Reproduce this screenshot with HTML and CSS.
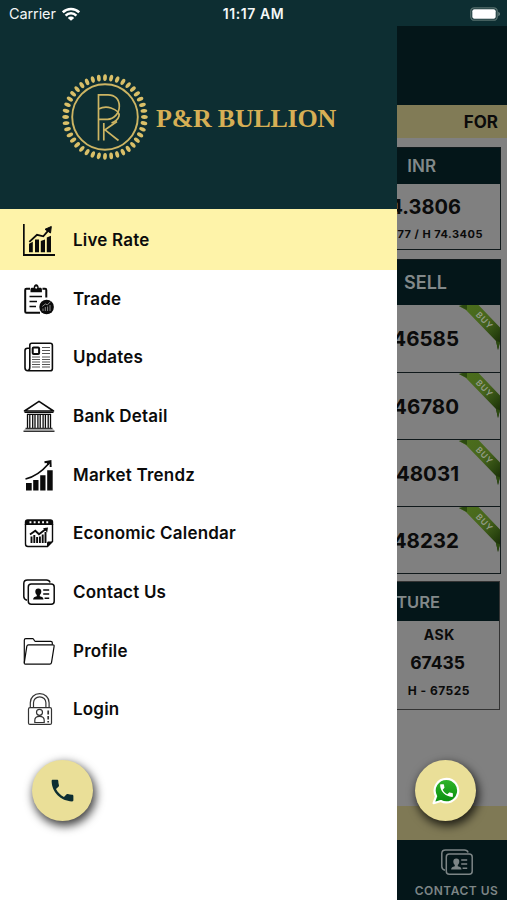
FILE: index.html
```html
<!DOCTYPE html>
<html lang="en">
<head>
  <meta charset="UTF-8" />
  <meta name="viewport" content="width=device-width, initial-scale=1.0" />
  <title>P&amp;R Bullion</title>
  <link rel="stylesheet" href="styles.css">
</head>
<body>
  <svg width="0" height="0" class="defs" aria-hidden="true">
    <defs>
      <linearGradient id="ribbonFill" x1="0" y1="0" x2="1" y2="1">
        <stop offset="0" stop-color="#4c701c" />
        <stop offset="0.5" stop-color="#47651d" />
        <stop offset="0.75" stop-color="#2c4710" />
        <stop offset="1" stop-color="#122204" />
      </linearGradient>
      <linearGradient id="waFill" x1="0" y1="0" x2="0" y2="1">
        <stop offset="0" stop-color="#31b52b" />
        <stop offset="1" stop-color="#078d0d" />
      </linearGradient>
      <symbol id="ribbon" viewBox="0 0 41 45">
        <path d="M0 1L4 0h15.500L41 22.500V37l-2 8-2-9L7 5z" fill="url(#ribbonFill)" />
        <path d="M0 1l4-1h4v5zM41 37l-2 8-2-9z" fill="#2c4a10" />
        <text x="25.500" y="18.500" transform="rotate(46 25.500 15.500)" text-anchor="middle" class="ribbon-text">BUY</text>
      </symbol>
      <symbol id="contact" viewBox="0 0 32 32">
        <g fill="none" stroke="currentColor" stroke-width="1.500">
          <path d="M4 24.300C1.600 23.600.8 22.500.8 20.500V7.500C.8 5 2 4 4.500 4h19c2 0 3 .8 3.600 2.400" />
          <rect x="5.300" y="8" width="25.900" height="20.300" rx="3" />
        </g>
        <path d="M15.300 12.500c2 0 3 1.300 3 3.100 0 1.600-.6 2.700-1.500 3.300v1.300c2.300.7 3.600 1.200 3.700 3.300H10.100c.1-2.100 1.400-2.600 3.700-3.300v-1.300c-.9-.6-1.500-1.700-1.500-3.300 0-1.800 1-3.100 3-3.100z" fill="currentColor" />
        <path d="M20.200 14h6M20.200 18h6M21.600 22.200h4.600" stroke="currentColor" stroke-width="1.400" />
      </symbol>
      <symbol id="phone" viewBox="0 0 24 24">
        <path d="M6.620 10.790c1.440 2.830 3.760 5.140 6.590 6.590l2.200-2.200c.27-.27.67-.36 1.020-.24 1.120.37 2.330.57 3.570.57.550 0 1 .45 1 1V20c0 .55-.45 1-1 1-9.390 0-17-7.610-17-17 0-.55.450-1 1-1h3.500c.550 0 1 .45 1 1 0 1.250.2 2.450.57 3.570.110.350.030.740-.25 1.020l-2.200 2.200z" fill="currentColor" />
      </symbol>
      <ellipse id="petal" cx="43" cy="3.600" rx="1.900" ry="3.400" transform="rotate(4 43 3.600)" />
    </defs>
  </svg>

  <div class="screen">
    <div class="statusbar">
      <div class="carrier">
        <span>Carrier</span>
        <svg width="18" height="14" viewBox="0 0 18 14">
          <g fill="none" stroke="#fff" stroke-width="2.500">
            <path d="M.8 5.300a11.600 11.600 0 0 1 16.400 0" />
            <path d="M3.600 8.600a7.600 7.600 0 0 1 10.800 0" />
          </g>
          <path d="M9 13.800L5.800 10.900a4.500 4.500 0 0 1 6.400 0z" fill="#fff" />
        </svg>
      </div>
      <div class="clock">11:17 AM</div>
      <div class="battery">
        <svg width="31" height="14" viewBox="0 0 31 14">
          <rect x=".8" y=".8" width="26.400" height="12.400" rx="3.500" fill="none" stroke="#58716f" stroke-width="1.300" />
          <rect x="2.300" y="2.300" width="23.400" height="9.400" rx="2" fill="#fff" />
          <path d="M28.400 4.800c2 .8 2 3.600 0 4.400z" fill="#78908d" />
        </svg>
      </div>
    </div>

    <div class="main">
      <nav class="drawer">
        <div class="brand">
          <svg class="emblem" width="86" height="86" viewBox="0 0 86 86">
            <g id="petals" fill="#d9bf68"></g>
            <circle cx="43" cy="43" r="32.800" fill="none" stroke="#cdb563" stroke-width="1.900" />
            <g fill="none" stroke="#cdb563" stroke-width="1.700">
              <path d="M36.500 66.500V20.800h9.500c7 0 11.300 4.500 11.300 11.500S52 45.300 45.500 45.300h-9" />
              <path d="M36.500 35c4-2 8.500-2.400 12.500-1 5.500 1.800 8.800 5 8 8-.8 3-3.500 5.500-7.500 7" />
              <path d="M41.800 66.500V49M56.500 66.500L43 55.800l12-8.300" />
            </g>
          </svg>
          <div class="brand-name">P&amp;R BULLION</div>
        </div>

        <a class="item active">
          <svg class="icon" viewBox="0 0 32 32">
            <path d="M.8 0v31h31.200" fill="none" stroke="currentColor" stroke-width="1.800" />
            <path d="M6 19.800l3.800-2V28.300H6zM12 15.500h4v12.800h-4zM17.800 17l4.200-1.500v12.800h-4.200zM23.800 13.500l4.200-1.800v16.600h-4.200z" fill="currentColor" />
            <path d="M6.300 17.800l7.700-7 6.300 1.500 6-7" fill="none" stroke="currentColor" stroke-width="1.800" />
            <path d="M22 5.300l6.300-2.800-.8 6.500z" fill="currentColor" stroke="currentColor" />
          </svg>
          <span>Live Rate</span>
        </a>
        <a class="item">
          <svg class="icon" viewBox="0 0 32 32">
            <path d="M7 5.800H3.400c-.8 0-1.200.5-1.200 1.200v21.500c0 .8.400 1.200 1.200 1.200H17M19.500 5.800h2.600c.8 0 1.200.5 1.200 1.200v7.500" fill="none" stroke="currentColor" stroke-width="2" />
            <path d="M7.500 9.300V6.500c0-1.200.7-1.800 1.800-1.800h1.400C10.700 2.500 11.700 1.300 13.200 1.300s2.500 1.200 2.500 3.400h1.500c1.100 0 1.700.6 1.700 1.800v2.800z" fill="currentColor" />
            <circle cx="13.200" cy="4.600" r="1.100" fill="#fff" />
            <path d="M6.500 13.500h12.500M6.500 18.500h7.500M6.500 23.500h6.500" stroke="currentColor" stroke-width="1.700" />
            <circle cx="23.600" cy="24" r="7.300" fill="currentColor" />
            <path d="M20 28v-2.500M22.300 28v-4M24.600 28v-4.500M27 28v-6M19.300 23.500l3-2.500 2.200.8 3-3.200" fill="none" stroke="#aaa" stroke-width=".8" />
          </svg>
          <span>Trade</span>
        </a>
        <a class="item">
          <svg class="icon" viewBox="0 0 32 32">
            <path d="M6.800 26.500V4.200c0-1.400.8-2 2-2h18.400c1.400 0 2.200.8 2.200 2.200v23c0 1.600-.8 2.400-2.400 2.400H5c-2 0-3-1-3-3V9.500c0-1.500.9-2.300 2.500-2.300h2.300M6.800 26c0 2-.8 3.500-2 3.500" fill="none" stroke="currentColor" stroke-width="1.600" />
            <rect x="9.700" y="6.500" width="6.400" height="6.600" rx="1" fill="none" stroke="currentColor" stroke-width="2" />
            <path d="M19 6.500h8M19 9.500h8M19 12.500h8M9 16h8M9 18.500h8M9 21h8M9 23.500h8M9 26h8M19 16h8M19 18.500h8M19 21h8M19 23.500h8M19 26h8" stroke="#555" stroke-width="1" />
          </svg>
          <span>Updates</span>
        </a>
        <a class="item">
          <svg class="icon" viewBox="0 0 32 32">
            <path d="M1.500 11L16 1.300 30.500 11z" fill="none" stroke="currentColor" stroke-width="1.600" stroke-linejoin="round" />
            <path d="M1.500 12.300h29M4 14.300h24" stroke="currentColor" stroke-width="1.200" />
            <path d="M4.500 14v14M6.800 14v14M9.700 14v14M12 14v14M14.900 14v14M17.200 14v14M20.100 14v14M22.400 14v14M25.200 14v14M27.500 14v14" stroke="currentColor" stroke-width="1.300" />
            <path d="M2.500 28.500h27M.5 31.200h31" stroke="#333" stroke-width="1.500" />
            <path d="M1.500 29.900h29" stroke="#999" stroke-width="1.200" />
          </svg>
          <span>Bank Detail</span>
        </a>
        <a class="item">
          <svg class="icon" viewBox="0 0 32 32">
            <path d="M3 24h5.700v7.600H3zM10.200 21h5.300v10.600h-5.300zM17.200 16.300h5.300v15.300h-5.300zM24.200 11.300h5.500v20.300h-5.500z" fill="currentColor" />
            <path d="M2.500 20C11 18 19 12.500 25.800 4.500" fill="none" stroke="currentColor" stroke-width="1.700" />
            <path d="M21.500 3.200l6-1 .2 5.800M27.300 2.500l-3 3" fill="none" stroke="currentColor" stroke-width="1.900" />
          </svg>
          <span>Market Trendz</span>
        </a>
        <a class="item">
          <svg class="icon" viewBox="0 0 32 32">
            <path d="M2.500 7V27c0 1.600.8 2.500 2.500 2.500h19.500l5-5V7" fill="none" stroke="currentColor" stroke-width="1.400" />
            <path d="M1.800 8V5c0-1.800 1-2.800 2.800-2.800h22.800c1.800 0 2.800 1 2.800 2.800v3z" fill="currentColor" />
            <path d="M6.500 5.300h20" stroke="#fff" stroke-width="1.900" stroke-dasharray="1.900 2.300" />
            <path d="M24 30v-4c0-1 .6-1.600 1.600-1.600H30z" fill="currentColor" />
            <path d="M8.500 19.500v6.500M11.300 18v8M14.100 20v6M16.900 19.500v6.500M19.700 17.500v8.500M22.500 15v11" stroke="currentColor" stroke-width="1.900" />
            <path d="M7 17.500l5.300-3.700 3.700 3.500L23.500 11.500" fill="none" stroke="currentColor" stroke-width="1.900" />
            <path d="M20 11.300l5-.8-.8 5z" fill="currentColor" />
          </svg>
          <span>Economic Calendar</span>
        </a>
        <a class="item">
          <svg class="icon"><use href="#contact" /></svg>
          <span>Contact Us</span>
        </a>
        <a class="item">
          <svg class="icon" viewBox="0 0 32 32">
            <g fill="none" stroke="currentColor" stroke-width="1.200" stroke-linejoin="round">
              <path d="M1.300 28V5.300c0-1 .5-1.600 1.500-1.600h7c1.200 0 1.300 2.600 2.500 2.600h15.500c1 0 1.500.5 1.500 1.500v2" />
              <path d="M5.500 9.800h24.300c1 0 1.500.6 1.300 1.600l-2.600 16.200c-.2 1-.8 1.500-1.800 1.500H2.300c-.8 0-1.200-.5-1-1.400l2.500-16.400c.2-1 .8-1.500 1.700-1.500z" />
            </g>
          </svg>
          <span>Profile</span>
        </a>
        <a class="item">
          <svg class="icon login" viewBox="0 0 32 32">
            <g fill="none" stroke="currentColor" stroke-width="1.200">
              <path d="M7.300 14.500V9.700C7.300 4.500 11.300.7 16.700.7s9.400 3.800 9.400 9v4.800M10.500 14.500v-4.700c0-3.500 2.700-6 6.200-6s6.200 2.500 6.200 6v4.700" />
              <rect x="5.500" y="14.700" width="23" height="16.700" rx="1.500" />
              <circle cx="16.500" cy="19.300" r="3" />
              <path d="M11.800 29.500v-2.200c0-2.500 1.800-4 4.700-4s4.700 1.500 4.700 4v2.200z" />
              <path d="M25.200 17.500v4M25.200 23v3.500M25.200 28v1.500" stroke-width="1.700" />
            </g>
          </svg>
          <span>Login</span>
        </a>
      </nav>

      <div class="rates">
        <div class="topbar"></div>
        <div class="ticker">FOR</div>

        <div class="content">
          <div class="card inr">
            <div class="card-head">INR</div>
            <div class="card-body">
              <div class="price">74.3806</div>
              <div class="range">L 74.2277 / H 74.3405</div>
            </div>
          </div>

          <div class="card sell">
            <div class="card-head">SELL</div>
            <div class="row">46585<svg class="ribbon"><use href="#ribbon" /></svg></div>
            <div class="row">46780<svg class="ribbon"><use href="#ribbon" /></svg></div>
            <div class="row">48031<svg class="ribbon"><use href="#ribbon" /></svg></div>
            <div class="row">48232<svg class="ribbon"><use href="#ribbon" /></svg></div>
          </div>

          <div class="card future">
            <div class="card-head">FUTURE</div>
            <div class="card-body">
              <div class="ask">ASK</div>
              <div class="ask-price">67435</div>
              <div class="high">H - 67525</div>
            </div>
          </div>
        </div>

        <div class="strip"></div>
        <div class="tab">
          <svg class="tab-icon"><use href="#contact" /></svg>
          <span>CONTACT US</span>
        </div>
      </div>
    </div>

    <div class="fab call">
      <svg width="29" height="29"><use href="#phone" /></svg>
    </div>
    <div class="fab whatsapp">
      <svg width="28" height="28" viewBox="0 0 28 28">
        <path d="M14.500 1.800a11.800 11.800 0 1 1-5.700 22.200L1.600 26.200l2.500-7A11.800 11.800 0 0 1 14.500 1.800z" fill="url(#waFill)" stroke="#fff" stroke-width="2.200" stroke-linejoin="round" />
        <svg x="6" y="5" width="17" height="17" color="#fff"><use href="#phone" /></svg>
      </svg>
    </div>
  </div>

  <script>
    // ring of petals around the monogram
    const petals = document.getElementById("petals");
    let ring = "";
    for (let i = 0; i < 40; i++) {
      ring += `<use href="#petal" transform="rotate(${i * 9} 43 43)" />`;
    }
    petals.innerHTML = ring;
  </script>
</body>
</html>
```
FILE: styles.css
```css
:root {
  --green: #0d2e32;
  --dim-green: #041619;
  --dim-bg: #808080;
  --yellow: #fef3a9;
}

* {
  box-sizing: border-box;
}

body {
  margin: 0;
  font-family: Inter, "Liberation Sans", sans-serif;
  color: #0b0b0b;
}

.defs {
  position: absolute;
}

.screen {
  position: relative;
  width: 507px;
  height: 900px;
  display: flex;
  flex-direction: column;
  overflow: hidden;
}

.statusbar {
  height: 26px;
  padding: 1px 6px 0 9px;
  display: grid;
  grid-template-columns: 1fr auto 1fr;
  align-items: center;
  background: var(--green);
  color: #f4f7f7;
  font-size: 14.5px;
}

.carrier {
  display: flex;
  align-items: center;
  gap: 6px;
  letter-spacing: -0.1px;
}

.clock {
  padding-right: 3px;
  font-size: 14px;
  font-weight: 600;
  letter-spacing: 0.6px;
}

.battery {
  display: flex;
  justify-content: flex-end;
}

.main {
  flex: 1;
  display: flex;
  min-height: 0;
}

/* drawer */
.drawer {
  width: 397px;
  flex: none;
  background: #fff;
}

.brand {
  height: 183px;
  padding: 0 0 2px 62px;
  display: flex;
  align-items: center;
  gap: 8px;
  background: var(--green);
}

.brand-name {
  font-family: "Liberation Serif", serif;
  font-weight: bold;
  font-size: 26px;
  letter-spacing: -0.25px;
  color: #d6af55;
  white-space: nowrap;
  padding-top: 4px;
}

.item {
  height: 58.66px;
  padding-left: 23px;
  display: flex;
  align-items: center;
  gap: 18px;
  font-size: 17px;
  font-weight: 600;
  letter-spacing: 0.2px;
}

.item.active {
  height: 60.5px;
  padding-top: 1px;
  background: var(--yellow);
}

.icon {
  width: 32px;
  height: 32px;
  flex: none;
}

.icon.login {
  color: #333;
}

/* dimmed rates page behind the drawer */
.rates {
  flex: 1;
  min-width: 0;
  display: flex;
  flex-direction: column;
  overflow: hidden;
  background: var(--dim-bg);
}

.topbar {
  height: 79px;
  background: var(--dim-green);
}

.ticker {
  height: 33px;
  padding-right: 9px;
  display: flex;
  align-items: center;
  justify-content: flex-end;
  background: #817b56;
  font-size: 17px;
  font-weight: 700;
}

.content {
  flex: 1;
  padding: 9px 6px 0 0;
  display: flex;
  flex-direction: column;
}

.card {
  border: 1px solid #10191b;
  border-left: none;
  font-weight: 700;
}

.card-head {
  display: flex;
  align-items: center;
  justify-content: flex-end;
  background: var(--dim-green);
  color: #82898a;
  font-weight: 600;
}

.card-body,
.row {
  display: flex;
  white-space: nowrap;
}

.card-body {
  flex-direction: column;
  align-items: flex-end;
}

.inr {
  height: 103px;
  margin-bottom: 9px;
}

.inr .card-head {
  height: 36px;
  padding-right: 64px;
  font-size: 17px;
}

.price {
  padding: 11px 39px 0 0;
  font-size: 20px;
  line-height: 24px;
}

.range {
  padding: 8px 17px 0 0;
  font-size: 11px;
  line-height: 14px;
  letter-spacing: 0.5px;
}

.sell {
  margin-bottom: 7px;
}

.sell .card-head {
  height: 45px;
  padding-right: 53px;
  font-size: 18px;
}

.row {
  position: relative;
  height: 67px;
  padding-right: 41px;
  align-items: center;
  justify-content: flex-end;
  font-size: 20.5px;
}

.row + .row {
  border-top: 1px solid #10191b;
}

.ribbon {
  position: absolute;
  top: 0;
  right: 0;
  width: 41px;
  height: 45px;
}

.ribbon-text {
  font-family: Inter, sans-serif;
  font-size: 8.5px;
  font-weight: 600;
  letter-spacing: 0.8px;
  fill: #939c88;
}

.future {
  height: 129px;
  margin-right: 1px;
  border-color: #333;
}

.future .card-head {
  height: 39px;
  padding-right: 59px;
  font-size: 16.5px;
}

.ask {
  padding: 5px 44px 0 0;
  font-size: 14px;
  line-height: 18px;
  letter-spacing: 0.6px;
}

.ask-price {
  padding: 8px 34px 0 0;
  font-size: 17.5px;
  line-height: 22px;
}

.high {
  padding: 9px 29px 0 0;
  font-size: 12px;
  line-height: 16px;
  letter-spacing: 0.5px;
}

.strip {
  height: 34px;
  background: #7f7955;
}

.tab {
  height: 60px;
  padding: 6px 0 0 9px;
  display: flex;
  flex-direction: column;
  align-items: center;
  background: var(--dim-green);
  color: #7d8586;
  font-size: 12px;
  font-weight: 600;
  letter-spacing: 0.5px;
}

.tab-icon {
  width: 32px;
  height: 32px;
  margin-bottom: 5px;
}

/* floating buttons */
.fab {
  position: absolute;
  top: 760px;
  width: 61px;
  height: 61px;
  border-radius: 50%;
  display: flex;
  align-items: center;
  justify-content: center;
  background: #eadf98;
  color: var(--green);
  box-shadow: 2px 4px 10px 1px rgba(0, 0, 0, 0.75);
}

.call {
  left: 32px;
}

.whatsapp {
  left: 415px;
}
```
